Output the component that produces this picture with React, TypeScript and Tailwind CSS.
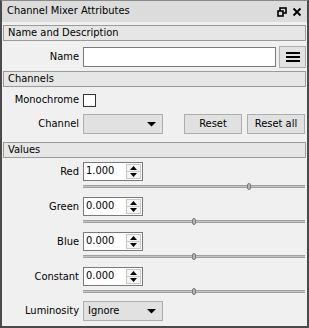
import React from "react";

const font = { fontFamily: '"DejaVu Sans Condensed", "Liberation Sans", Arial, sans-serif' };

function Header({ title }: { title: string }) {
  return (
    <div className="h-[16px] border border-[#9a9a9a] bg-[#e6e6e6] pl-[4px] text-[11px] leading-[14px] text-black">
      {title}
    </div>
  );
}

function Label({ text }: { text: string }) {
  return <div className="w-[77px] shrink-0 pr-[1px] text-right text-[11px] leading-[14px] text-black">{text}</div>;
}

function Arrow() {
  return (
    <svg width="9" height="5" viewBox="0 0 9 5" className="block">
      <path d="M0 0 H9 L4.5 4.5 Z" fill="#000" />
    </svg>
  );
}

function Combo({ value }: { value: string }) {
  return (
    <div className="flex h-[20px] w-[80px] items-center justify-between border border-[#adadad] bg-[#e1e1e1] pl-[4px] pr-[6px] text-[11px] text-black">
      <span>{value}</span>
      <Arrow />
    </div>
  );
}

function Spin({ value }: { value: string }) {
  return (
    <div className="flex h-[19px] w-[60px] items-stretch border border-[#7a7a7a] bg-white">
      <div className="flex flex-1 items-center pl-[2px] text-[11px] text-black">{value}</div>
      <div className="my-[1px] mr-[1px] flex w-[15px] flex-col border border-[#c8c8c8] bg-[#f4f4f4]">
        <div className="flex flex-1 items-center justify-center border-b border-[#c8c8c8]">
          <svg width="7" height="4" viewBox="0 0 7 4" className="block">
            <path d="M0 4 H7 L3.5 0 Z" fill="#000" />
          </svg>
        </div>
        <div className="flex flex-1 items-center justify-center">
          <svg width="7" height="4" viewBox="0 0 7 4" className="block">
            <path d="M0 0 H7 L3.5 4 Z" fill="#000" />
          </svg>
        </div>
      </div>
    </div>
  );
}

function Slider({ pos }: { pos: number }) {
  return (
    <div className="relative ml-[80px] h-[7px] w-[222px]">
      <div className="absolute left-0 right-0 top-[2px] h-[3px] border-y border-[#a0a0a0] bg-[#c4c4c4]" />
      <div
        className="absolute top-0 h-[7px] w-[4px] rounded-[2px] border border-[#7a7a7a] bg-[#b8b8b8]"
        style={{ left: `${pos * 221 - 2}px` }}
      />
    </div>
  );
}

function ValueRow({ label, value, pos }: { label: string; value: string; pos: number }) {
  return (
    <div className="flex flex-col">
      <div className="flex items-center gap-[3px]">
        <Label text={label} />
        <Spin value={value} />
      </div>
      <div className="mt-[2px]">
        <Slider pos={pos} />
      </div>
    </div>
  );
}

export default function App() {
  return (
    <div
      className="flex h-[328px] w-[309px] flex-col border-x-2 border-b-2 border-t border-x-[#4a4a4a] border-b-[#4a4a4a] border-t-[#8a8a8a] bg-[#f0f0f0]"
      style={font}
    >
      <div className="flex h-[21px] shrink-0 items-center justify-between bg-[#dcdcdc] pl-[5px] pr-[5px] text-[11px] text-black">
        <span>Channel Mixer Attributes</span>
        <div className="flex items-center gap-[5px]">
          <svg width="10" height="10" viewBox="0 0 10 10" className="block">
            <rect x="3" y="1" width="6" height="5" fill="none" stroke="#000" strokeWidth="1.6" />
            <rect x="1" y="4" width="5" height="5" fill="#dcdcdc" stroke="#000" strokeWidth="1.6" />
          </svg>
          <svg width="10" height="10" viewBox="0 0 10 10" className="block">
            <path d="M1.5 1.5 L8.5 8.5 M8.5 1.5 L1.5 8.5" stroke="#000" strokeWidth="1.8" />
          </svg>
        </div>
      </div>
      <div className="flex flex-col px-[1px] pt-[3px]">
        <Header title="Name and Description" />
        <div className="mt-[5px] flex items-center gap-[3px]">
          <Label text="Name" />
          <div className="h-[20px] flex-1 border border-[#7a7a7a] bg-white" />
          <div className="flex h-[22px] w-[27px] items-center justify-center border border-[#adadad] bg-[#e1e1e1]">
            <svg width="14" height="12" viewBox="0 0 14 12" className="block">
              <rect x="0" y="1" width="14" height="2" fill="#000" />
              <rect x="0" y="5" width="14" height="2" fill="#000" />
              <rect x="0" y="9" width="14" height="2" fill="#000" />
            </svg>
          </div>
        </div>
        <div className="mt-[3px]">
          <Header title="Channels" />
        </div>
        <div className="mt-[6px] flex items-center gap-[3px]">
          <Label text="Monochrome" />
          <div className="h-[13px] w-[13px] border border-[#333] bg-white" />
        </div>
        <div className="mt-[7px] flex items-center gap-[3px]">
          <Label text="Channel" />
          <Combo value="" />
          <div className="ml-auto mr-[1px] flex gap-[5px]">
            <div className="flex h-[20px] w-[58px] items-center justify-center border border-[#adadad] bg-[#e1e1e1] text-[11px] text-black">
              Reset
            </div>
            <div className="flex h-[20px] w-[58px] items-center justify-center border border-[#adadad] bg-[#e1e1e1] text-[11px] text-black">
              Reset all
            </div>
          </div>
        </div>
        <div className="mt-[8px]">
          <Header title="Values" />
        </div>
        <div className="mt-[4px] flex flex-col gap-[7px]">
          <ValueRow label="Red" value="1.000" pos={0.75} />
          <ValueRow label="Green" value="0.000" pos={0.5} />
          <ValueRow label="Blue" value="0.000" pos={0.5} />
          <ValueRow label="Constant" value="0.000" pos={0.5} />
        </div>
        <div className="mt-[6px] flex items-center gap-[3px]">
          <Label text="Luminosity" />
          <Combo value="Ignore" />
        </div>
      </div>
    </div>
  );
}
